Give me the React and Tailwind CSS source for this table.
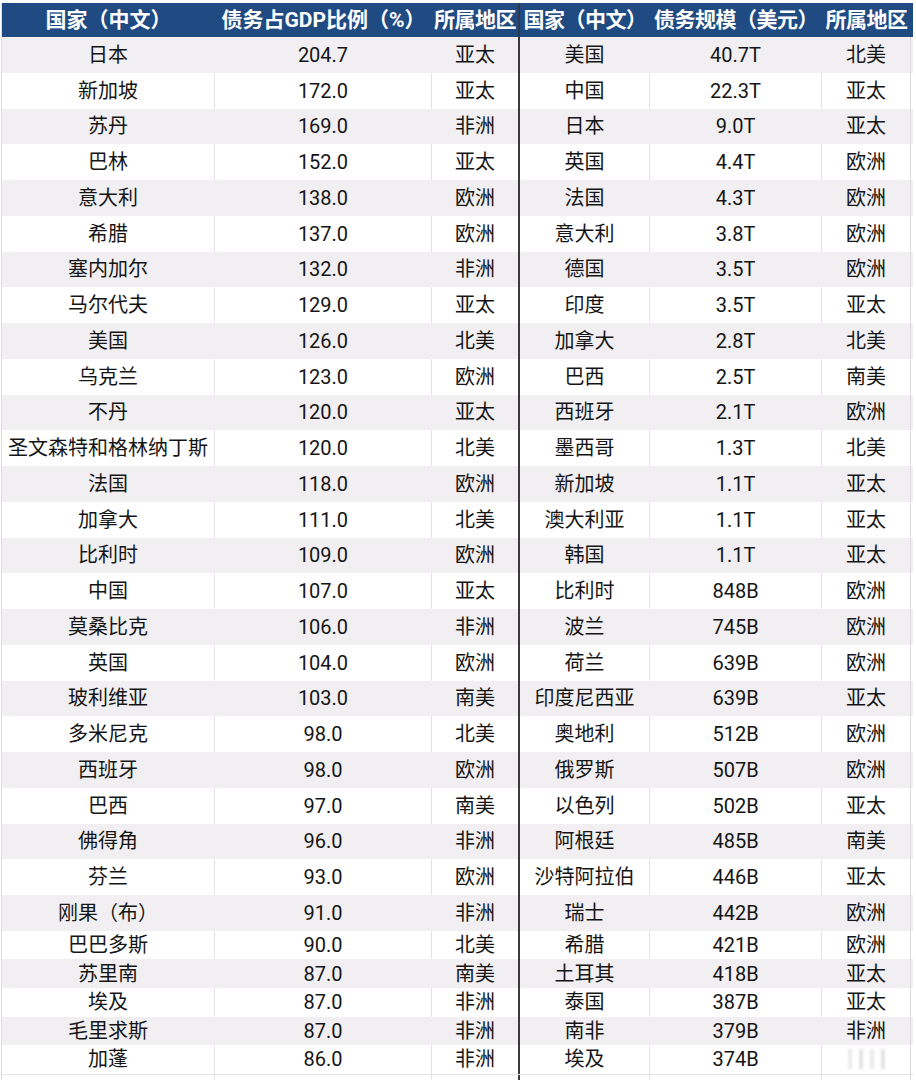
const left = [
  ['日本', '204.7', '亚太'],
  ['新加坡', '172.0', '亚太'],
  ['苏丹', '169.0', '非洲'],
  ['巴林', '152.0', '亚太'],
  ['意大利', '138.0', '欧洲'],
  ['希腊', '137.0', '欧洲'],
  ['塞内加尔', '132.0', '非洲'],
  ['马尔代夫', '129.0', '亚太'],
  ['美国', '126.0', '北美'],
  ['乌克兰', '123.0', '欧洲'],
  ['不丹', '120.0', '亚太'],
  ['圣文森特和格林纳丁斯', '120.0', '北美'],
  ['法国', '118.0', '欧洲'],
  ['加拿大', '111.0', '北美'],
  ['比利时', '109.0', '欧洲'],
  ['中国', '107.0', '亚太'],
  ['莫桑比克', '106.0', '非洲'],
  ['英国', '104.0', '欧洲'],
  ['玻利维亚', '103.0', '南美'],
  ['多米尼克', '98.0', '北美'],
  ['西班牙', '98.0', '欧洲'],
  ['巴西', '97.0', '南美'],
  ['佛得角', '96.0', '非洲'],
  ['芬兰', '93.0', '欧洲'],
  ['刚果（布）', '91.0', '非洲'],
  ['巴巴多斯', '90.0', '北美'],
  ['苏里南', '87.0', '南美'],
  ['埃及', '87.0', '非洲'],
  ['毛里求斯', '87.0', '非洲'],
  ['加蓬', '86.0', '非洲'],
];

const right = [
  ['美国', '40.7T', '北美'],
  ['中国', '22.3T', '亚太'],
  ['日本', '9.0T', '亚太'],
  ['英国', '4.4T', '欧洲'],
  ['法国', '4.3T', '欧洲'],
  ['意大利', '3.8T', '欧洲'],
  ['德国', '3.5T', '欧洲'],
  ['印度', '3.5T', '亚太'],
  ['加拿大', '2.8T', '北美'],
  ['巴西', '2.5T', '南美'],
  ['西班牙', '2.1T', '欧洲'],
  ['墨西哥', '1.3T', '北美'],
  ['新加坡', '1.1T', '亚太'],
  ['澳大利亚', '1.1T', '亚太'],
  ['韩国', '1.1T', '亚太'],
  ['比利时', '848B', '欧洲'],
  ['波兰', '745B', '欧洲'],
  ['荷兰', '639B', '欧洲'],
  ['印度尼西亚', '639B', '亚太'],
  ['奥地利', '512B', '欧洲'],
  ['俄罗斯', '507B', '欧洲'],
  ['以色列', '502B', '亚太'],
  ['阿根廷', '485B', '南美'],
  ['沙特阿拉伯', '446B', '亚太'],
  ['瑞士', '442B', '欧洲'],
  ['希腊', '421B', '欧洲'],
  ['土耳其', '418B', '亚太'],
  ['泰国', '387B', '亚太'],
  ['南非', '379B', '非洲'],
  ['埃及', '374B', ''],
];

const font = { fontFamily: 'Roboto, "Noto Sans CJK SC", sans-serif' };

function Row({ i }) {
  const gray = i % 2 === 0;
  const h = i < 25 ? 'h-[35.75px]' : 'h-[28.6px]';
  const bg = gray ? 'bg-[#f1eff2]' : 'bg-white';
  const line = gray ? 'border-[#f1eff2]' : 'border-[#e4e2e5]';
  const [a, b, c] = left[i];
  const [d, e, f] = right[i];
  return (
    <div className={`flex ${h} ${bg} text-[20px] text-[#151515] leading-none`}>
      <div className={`w-[213px] flex items-center justify-center whitespace-nowrap border-r ${line}`}>{a}</div>
      <div className={`w-[217px] flex items-center justify-center border-r ${line}`}>{b}</div>
      <div className="w-[88px] flex items-center justify-center border-r-2 border-[#3b3b3b]">{c}</div>
      <div className={`w-[130px] flex items-center justify-center whitespace-nowrap border-r ${line}`}>{d}</div>
      <div className={`w-[172px] flex items-center justify-center border-r ${line}`}>{e}</div>
      <div className="w-[89px] flex items-center justify-center border-r border-[#dcdadd]">
        {f || (
          // blurred watermark over the last cell
          <div className="flex gap-[7px] opacity-40 blur-[1px]">
            <span className="w-[4px] h-[20px] bg-[#cfcfcf]" />
            <span className="w-[4px] h-[20px] bg-[#bdbdbd]" />
            <span className="w-[4px] h-[20px] bg-[#cfcfcf]" />
            <span className="w-[4px] h-[20px] bg-[#bdbdbd]" />
          </div>
        )}
      </div>
    </div>
  );
}

export default function App() {
  return (
    <div className="w-[916px] h-[1080px] overflow-hidden bg-white pt-[3px]" style={font}>
      <div className="flex flex-col border-l border-[#dedcdf] ml-[1px] w-[912px]">
        <div className="flex h-[34px] bg-[#1f4b82] text-white font-bold text-[21px] leading-none whitespace-nowrap">
          <div className="w-[213px] flex items-center justify-center">国家（中文）</div>
          <div className="w-[217px] flex items-center justify-center">债务占GDP比例（%）</div>
          <div className="w-[88px] flex items-center justify-center border-r-2 border-[#2c3a4e] tracking-[-0.5px]">所属地区</div>
          <div className="w-[130px] flex items-center justify-center tracking-[-0.5px]">国家（中文）</div>
          <div className="w-[172px] flex items-center justify-center tracking-[-0.5px]">债务规模（美元）</div>
          <div className="w-[89px] flex items-center justify-center tracking-[-0.5px]">所属地区</div>
        </div>
        {left.map((_, i) => (
          <Row key={i} i={i} />
        ))}
        <div className="flex h-[8px] border-t border-[#e4e2e5]">
          <div className="w-[213px] border-r border-[#e4e2e5]" />
          <div className="w-[217px] border-r border-[#e4e2e5]" />
          <div className="w-[88px] border-r-2 border-[#3b3b3b]" />
          <div className="w-[130px] border-r border-[#e4e2e5]" />
          <div className="w-[172px] border-r border-[#e4e2e5]" />
          <div className="w-[89px] border-r border-[#dcdadd]" />
        </div>
      </div>
    </div>
  );
}
